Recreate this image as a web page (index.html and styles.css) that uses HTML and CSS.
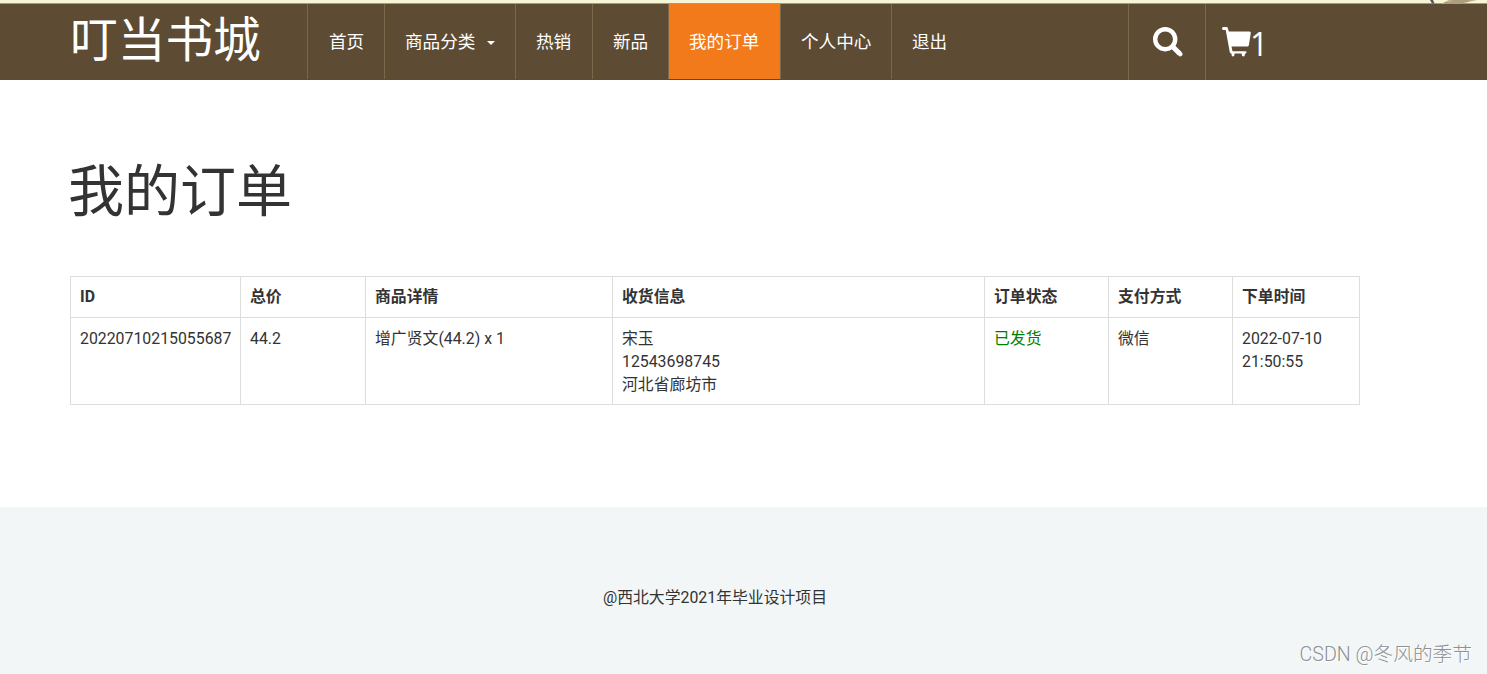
FILE: index.html
```
<!DOCTYPE html>
<html lang="zh-CN">
<head>
<meta charset="utf-8">
<title>我的订单</title>
<link rel="stylesheet" href="styles.css">
</head>
<body>
<div class="top-strip">
  <svg class="strip-art" width="70" height="4" viewBox="0 0 70 4"><path d="M13 0h3l1.500 3.500h-2.500z" fill="#55565a"/><path d="M32 0h28l-9 2-7 2H24z" fill="#bcae87"/><path d="M35 1h17M27 3h20" stroke="#91856a" stroke-width=".7"/></svg>
</div>
<header class="header">
  <a class="brand">叮当书城</a>
  <nav class="nav">
    <a class="nav-item home">首页</a>
    <a class="nav-item category">商品分类<span class="caret"></span></a>
    <a class="nav-item hot">热销</a>
    <a class="nav-item fresh">新品</a>
    <a class="nav-item orders">我的订单</a>
    <a class="nav-item profile">个人中心</a>
    <a class="nav-item logout">退出</a>
  </nav>
  <a class="tool search">
    <svg width="30" height="30" viewBox="0 0 30 30"><circle cx="12.2" cy="12.200" r="10" fill="none" stroke="#fff" stroke-width="4.400"/><path d="M19 19l7.600 7.600" stroke="#fff" stroke-width="5" stroke-linecap="butt"/><path d="M25.500 25.500l1.700 1.700" stroke="#fff" stroke-width="4.500" stroke-linecap="round"/></svg>
  </a>
  <a class="tool cart">
    <svg width="30" height="30" viewBox="0 0 30 30"><path fill="#fff" d="M1.200 0H4.500q1 0 1.300 1l1 3.500h20.700q1.500 0 1.300 1.500L26.900 18q-.2 1.600-1.800 1.600H9.500l1 4.600h13q1 0 1 1t-1 1.200l-.6 1q0 2-1.500 2t-1.700-2v-1h-7.200v1q0 2-1.500 2t-1.500-2v-1H9q-1 0-1.200-1.100L3.700 2.900H1.200Q0 2.900 0 1.500T1.200 0z"/></svg>
    <span class="count">1</span>
  </a>
</header>
<main class="main">
  <h1 class="title">我的订单</h1>
  <table class="order-table">
    <colgroup><col class="c-id"><col class="c-total"><col class="c-detail"><col class="c-address"><col class="c-status"><col class="c-pay"><col class="c-time"></colgroup>
    <thead>
      <tr><th>ID</th><th>总价</th><th>商品详情</th><th>收货信息</th><th>订单状态</th><th>支付方式</th><th>下单时间</th></tr>
    </thead>
    <tbody>
      <tr><td>20220710215055687</td><td>44.2</td><td>增广贤文(44.2) x 1</td><td>宋玉<br>12543698745<br>河北省廊坊市</td><td class="shipped">已发货</td><td>微信</td><td>2022-07-10<br>21:50:55</td></tr>
    </tbody>
  </table>
</main>
<footer class="footer">
  <p class="copyright">@西北大学2021年毕业设计项目</p>
  <span class="watermark">CSDN @冬风的季节</span>
</footer>
</body>
</html>
```
FILE: styles.css
```
* { box-sizing: border-box; }
body {
  margin: 0;
  min-height: 674px;
  display: flex;
  flex-direction: column;
  background: #fff;
  color: #333;
  font-family: Roboto, "Noto Sans CJK SC", sans-serif;
  font-size: 15.85px;
  line-height: 23px;
}
.top-strip {
  height: 4px;
  display: flex;
  justify-content: flex-end;
  background: #f6f5d5;
  border-bottom: 1px solid #a59c7d;
}
.strip-art { display: block; flex: none; }
.header {
  display: flex;
  height: 76px;
  padding-left: 70px;
  background: #5d4b33;
  color: #fff;
}
.brand {
  width: 237px;
  font-size: 47.7px;
  line-height: 75px;
  white-space: nowrap;
}
.nav { display: flex; width: 821px; height: 75px; }
.nav-item {
  flex: none;
  border-left: 1px solid #7a6848;
  padding-left: 20px;
  font-size: 17.6px;
  line-height: 77px;
  white-space: nowrap;
}
.home { width: 77px; padding-left: 21px; }
.category { width: 131px; }
.hot { width: 77px; }
.fresh { width: 76px; }
.orders { width: 112px; background: #f27a1a; }
.profile { width: 111px; }
.logout { width: 120px; }
.caret {
  display: inline-block;
  margin-left: 12px;
  border: 4px solid transparent;
  border-top-color: #fff;
  border-bottom: 0;
  vertical-align: 3px;
}
.tool { display: flex; border-left: 1px solid #7a6848; height: 76px; }
.tool svg { flex: none; display: block; }
.search { width: 77px; padding: 23px 0 0 24px; }
.cart { padding: 23px 0 0 16px; }
.count {
  margin-left: -2px;
  padding-top: 2px;
  font-family: "Open Sans", sans-serif;
  font-size: 32px;
  line-height: 30px;
}
.main { height: 427px; padding: 76px 0 0 70px; }
.title {
  margin: 0 0 48px -2px;
  font-size: 56px;
  line-height: 72px;
  font-weight: 400;
}
.order-table {
  width: 1290px;
  table-layout: fixed;
  border-collapse: collapse;
}
.order-table th, .order-table td {
  border: 1px solid #ddd;
  padding: 8px 9px 9px;
  text-align: left;
  vertical-align: top;
  white-space: nowrap;
}
.order-table th { font-weight: 700; }
.order-table td { padding: 9px 9px 8px; }
.order-table .shipped { color: #008000; }
.c-id { width: 170px; }
.c-total { width: 125px; }
.c-detail { width: 247px; }
.c-address { width: 372px; }
.c-status, .c-pay { width: 124px; }
.c-time { width: 127px; }
.footer {
  flex: 1;
  display: flex;
  flex-direction: column;
  padding-top: 79px;
  background: #f2f6f7;
}
.copyright { width: 1430px; margin: 0; text-align: center; }
.watermark {
  align-self: flex-end;
  margin: 33px 15px 0 0;
  color: #8d9192;
  font-size: 19.7px;
  font-weight: 300;
  line-height: 26px;
  text-shadow: 1px 1px 0 #fff;
}
```
